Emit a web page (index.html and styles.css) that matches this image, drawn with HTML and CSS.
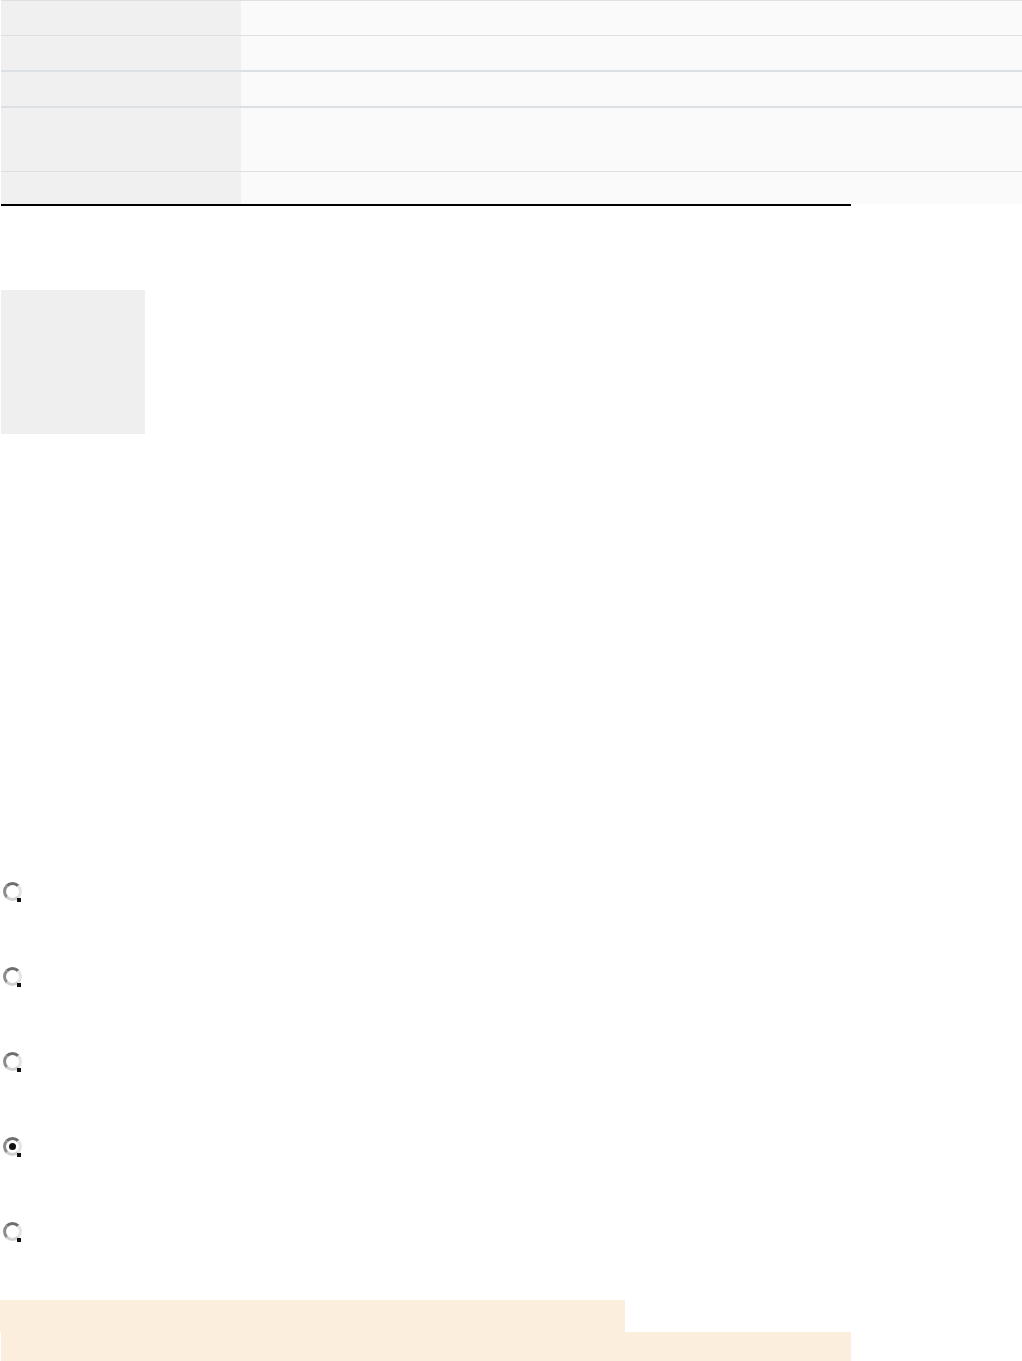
FILE: index.html
```html
<!DOCTYPE html>
<html lang="en">
<head>
    <meta charset="UTF-8">
    <meta name="viewport" content="width=device-width, initial-scale=1.0">
    <title>Details</title>
    <link rel="stylesheet" href="styles.css">
</head>
<body>

    <div class="page">
        <table class="details">
            <tr class="row row-first"><th></th><td></td></tr>
            <tr class="row"><th></th><td></td></tr>
            <tr class="row row-blue"><th></th><td></td></tr>
            <tr class="row row-blue row-tall"><th></th><td></td></tr>
            <tr class="row row-last"><th></th><td></td></tr>
        </table>
        <div class="rule"></div>

        <div class="thumb"></div>

        <form class="choices">
            <label class="choice"><span class="radio"></span></label>
            <label class="choice"><span class="radio"></span></label>
            <label class="choice"><span class="radio"></span></label>
            <label class="choice"><span class="radio checked"></span></label>
            <label class="choice"><span class="radio"></span></label>
        </form>

        <div class="notice">
            <div class="notice-top"></div>
            <div class="notice-bottom"></div>
        </div>
    </div>

</body>
</html>
```

FILE: styles.css
```css
body {
    margin: 0;
    font-family: "Liberation Sans", Arial, sans-serif;
    background-color: #fff;
}
.page {
    display: flex;
    flex-direction: column;
    align-items: flex-start;
}
.details {
    width: 1021px;
    border-collapse: collapse;
    margin-left: 1px;
}
.row th, .row td {
    height: 34px;
    padding: 0;
    border-top: 1px solid #e0e0e0;
}
.row th {
    width: 240px;
    background-color: #f0f0f0;
}
.row td {
    background-color: #fafafa;
}
.row-first th, .row-first td {
    border-top-color: #dde0e5;
}
.row-blue th, .row-blue td {
    border-top: 2px solid #dcdfe4;
}
.row-tall th, .row-tall td {
    height: 63px;
}
.row-last th, .row-last td {
    height: 32px;
}
.rule {
    width: 850px;
    height: 2px;
    margin-left: 1px;
    background-color: #000;
}
.thumb {
    width: 144px;
    height: 144px;
    margin: 84px 0 0 1px;
    background-color: #efefef;
}
.choices {
    display: flex;
    flex-direction: column;
    gap: 66px;
    margin: 448px 0 0 3px;
}
.choice {
    display: block;
    height: 19px;
}
.radio {
    display: block;
    position: relative;
    width: 13px;
    height: 13px;
    border: 3px solid;
    border-color: #6e6e6e #e4e4e4 #d0d0d0 #8c8c8c;
    border-radius: 50%;
    background-color: #fff;
}
.radio::after {
    content: "";
    position: absolute;
    right: -2px;
    bottom: -4px;
    width: 4px;
    height: 4px;
    background-color: #111;
}
.radio.checked::before {
    content: "";
    position: absolute;
    left: 3px;
    top: 3px;
    width: 7px;
    height: 7px;
    border-radius: 50%;
    background-color: #111;
}
.notice {
    margin-top: 59px;
    display: flex;
    flex-direction: column;
    align-items: flex-start;
}
.notice-top {
    width: 625px;
    height: 32px;
    background-color: #fbeedc;
}
.notice-bottom {
    width: 850px;
    height: 30px;
    margin-left: 1px;
    background-color: #fbeedc;
}
```
